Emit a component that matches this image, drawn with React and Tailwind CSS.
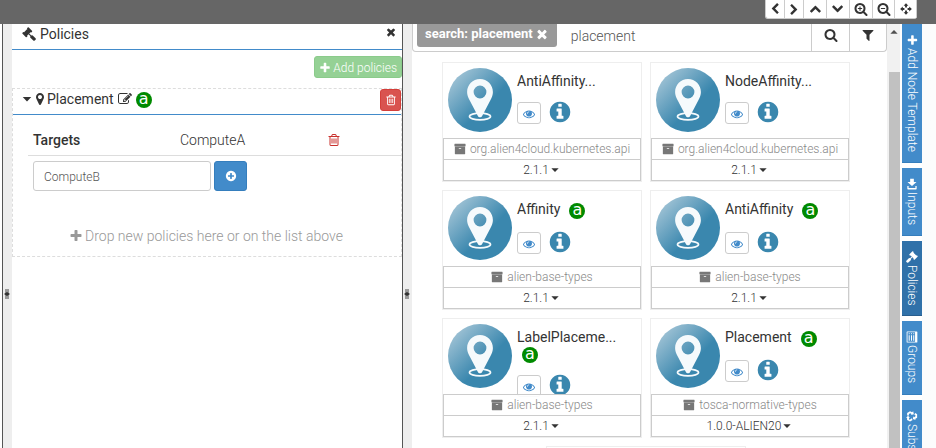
import React from "react";

const CIRCLE =
  "M1664 896q0 209-103 385.5t-279.5 279.5-385.5 103-385.5-103-279.5-279.5-103-385.5 103-385.5 279.5-279.5 385.5-103 385.5 103 279.5 279.5 103 385.5z";
const LENS =
  "M1216 832q0-185-131.5-316.5t-316.5-131.5-316.5 131.5-131.5 316.5 131.5 316.5 316.5 131.5 316.5-131.5 131.5-316.5zm512 832q0 52-38 90t-90 38q-54 0-90-38l-343-342q-179 124-399 124-143 0-273.5-55.5t-225-150-150-225-55.5-273.5 55.5-273.5 150-225 225-150 273.5-55.5 273.5 55.5 225 150 150 225 55.5 273.5q0 220-124 399l343 343q37 37 37 90z";

const PATHS = {
  plus: "M1600 736v192q0 40-28 68t-68 28h-416v416q0 40-28 68t-68 28h-192q-40 0-68-28t-28-68v-416h-416q-40 0-68-28t-28-68v-192q0-40 28-68t68-28h416v-416q0-40 28-68t68-28h192q40 0 68 28t28 68v416h416q40 0 68 28t28 68z",
  times:
    "M1490 1322q0 40-28 68l-136 136q-28 28-68 28t-68-28l-294-294-294 294q-28 28-68 28t-68-28l-136-136q-28-28-28-68t28-68l294-294-294-294q-28-28-28-68t28-68l136-136q28-28 68-28t68 28l294 294 294-294q28-28 68-28t68 28l136 136q28 28 28 68t-28 68l-294 294 294 294q28 28 28 68z",
  gavel:
    "M1771 1536q0 53-37 90l-107 108q-39 37-91 37-53 0-90-37l-363-364q-38-36-38-90 0-53 43-96l-256-256-126 126q-14 14-34 14t-34-14q2 2 12.5 12t12.5 13 10 11.5 10 13.5 6 13.5 5.5 16.5 1.5 18q0 38-28 68-3 3-16.5 18t-19 20.5-18.5 16.5-22 15.5-22 9-26 4.5q-40 0-68-28l-408-408q-28-28-28-68 0-13 4.5-26t9-22 15.5-22 16.5-18.5 20.5-19 18-16.5q30-28 68-28 10 0 18 1.5t16.5 5.5 13.5 6 13.5 10 11.5 10 13 12.5 12 12.5q-14-14-14-34t14-34l348-348q14-14 34-14t34 14q-2-2-12.5-12t-12.5-13-10-11.5-10-13.5-6-13.5-5.5-16.5-1.5-18q0-38 28-68 3-3 16.5-18t19-20.5 18.5-16.5 22-15.5 22-9 26-4.5q40 0 68 28l408 408q28 28 28 68 0 13-4.5 26t-9 22-15.5 22-16.5 18.5-20.5 19-18 16.5q-30 28-68 28-10 0-18-1.5t-16.5-5.5-13.5-6-13.5-10-11.5-10-13-12.5-12-12.5q14 14 14 34t-14 34l-126 126 256 256q43-43 96-43 52 0 91 37l363 363q37 39 37 91z",
  trash:
    "M704 736v576q0 14-9 23t-23 9h-64q-14 0-23-9t-9-23v-576q0-14 9-23t23-9h64q14 0 23 9t9 23zm256 0v576q0 14-9 23t-23 9h-64q-14 0-23-9t-9-23v-576q0-14 9-23t23-9h64q14 0 23 9t9 23zm256 0v576q0 14-9 23t-23 9h-64q-14 0-23-9t-9-23v-576q0-14 9-23t23-9h64q14 0 23 9t9 23zm128 724v-948h-896v948q0 22 7 40.5t14.5 27 10.5 8.5h832q3 0 10.5-8.5t14.5-27 7-40.5zm-672-1076h448l-48-117q-7-9-17-11h-317q-10 2-17 11zm928 32v64q0 14-9 23t-23 9h-96v948q0 83-47 143.5t-113 60.5h-832q-66 0-113-58.5t-47-141.5v-952h-96q-14 0-23-9t-9-23v-64q0-14 9-23t23-9h309l70-167q15-37 54-63t79-26h320q40 0 79 26t54 63l70 167h309q14 0 23 9t9 23z",
  edit: "M888 1184l116-116-152-152-116 116v56h96v96h56zm440-720q-16-16-33 1l-350 350q-17 17-1 33t33-1l350-350q17-17 1-33zm80 594v190q0 119-84.5 203.5t-203.5 84.5h-832q-119 0-203.5-84.5t-84.5-203.5v-832q0-119 84.5-203.5t203.5-84.5h832q63 0 117 25 15 7 18 23 3 17-9 29l-49 49q-14 14-32 8-23-6-45-6h-832q-66 0-113 47t-47 113v832q0 66 47 113t113 47h832q66 0 113-47t47-113v-126q0-13 9-22l64-64q15-15 35-7t20 29zm-96-738l288 288-672 672h-288v-288zm444 132l-92 92-288-288 92-92q28-28 68-28t68 28l152 152q28 28 28 68t-28 68z",
  marker:
    "M1152 640q0-106-75-181t-181-75-181 75-75 181 75 181 181 75 181-75 75-181zm256 0q0 109-33 179l-364 774q-16 33-47.5 52t-67.5 19-67.5-19-46.5-52l-365-774q-33-70-33-179 0-212 150-362t362-150 362 150 150 362z",
  search: LENS,
  zoomIn: LENS + "M700 560h136v204h204v136h-204v204h-136v-204h-204v-136h204z",
  zoomOut: LENS + "M496 764h544v136h-544z",
  filter:
    "M1595 295q17 41-14 70l-493 493v742q0 42-39 59-13 5-25 5-27 0-45-19l-256-256q-19-19-19-45v-486l-493-493q-31-29-14-70 17-39 59-39h1280q42 0 59 39z",
  eye: "M1664 960q-152-236-381-353 61 104 61 225 0 185-131.5 316.5t-316.5 131.5-316.5-131.5-131.5-316.5q0-121 61-225-229 117-381 353 133 205 333.5 326.5t434.5 121.5 434.5-121.5 333.5-326.5zm-720-384q0-20-14-34t-34-14q-125 0-214.5 89.5t-89.5 214.5q0 20 14 34t34 14 34-14 14-34q0-86 61-147t147-61q20 0 34-14t14-34zm848 384q0 34-20 69-140 230-376.5 368.5t-499.5 138.5-499.5-139-376.5-368q-20-35-20-69t20-69q140-229 376.5-368t499.5-139 499.5 139 376.5 368q20 35 20 69z",
  info:
    "M1152 1376v-160q0-14-9-23t-23-9h-96v-512q0-14-9-23t-23-9h-320q-14 0-23 9t-9 23v160q0 14 9 23t23 9h96v320h-96q-14 0-23 9t-9 23v160q0 14 9 23t23 9h448q14 0 23-9t9-23zm-128-896v-160q0-14-9-23t-23-9h-192q-14 0-23 9t-9 23v160q0 14 9 23t23 9h192q14 0 23-9t9-23z" +
    CIRCLE,
  plusCircle:
    "M1344 960v-128q0-26-19-45t-45-19h-256v-256q0-26-19-45t-45-19h-128q-26 0-45 19t-19 45v256h-256q-26 0-45 19t-19 45v128q0 26 19 45t45 19h256v256q0 26 19 45t45 19h128q26 0 45-19t19-45v-256h256q26 0 45-19t19-45z" +
    CIRCLE,
  archive:
    "M1088 832q0-26-19-45t-45-19h-256q-26 0-45 19t-19 45 19 45 45 19h256q26 0 45-19t19-45zm576-192v960q0 26-19 45t-45 19h-1408q-26 0-45-19t-19-45v-960q0-26 19-45t45-19h1408q26 0 45 19t19 45zm64-448v256q0 26-19 45t-45 19h-1536q-26 0-45-19t-19-45v-256q0-26 19-45t45-19h1536q26 0 45 19t19 45z",
  chevron:
    "M1427 301l-531 531 531 531q19 19 19 45t-19 45l-166 166q-19 19-45 19t-45-19l-742-742q-19-19-19-45t19-45l742-742q19-19 45-19t45 19l166 166q19 19 19 45t-19 45z",
  caret: "M350 640h1092l-546 560z",
  download:
    "M1180 200h420q100 0 100 100v1192q0 100-100 100h-420v-190h330v-1012h-330zM100 620h480v-400l620 676-620 676v-400h-480z",
  list:
    "M160 96h1472q100 0 100 100v1400q0 100-100 100h-1472q-100 0-100-100v-1400q0-100 100-100zM190 440v1126h1412v-1126zM320 560h170v150h-170zM620 560h850v150h-850zM320 900h170v150h-170zM620 900h850v150h-850zM320 1240h170v150h-170zM620 1240h850v150h-850z",
  recycle:
    "M620 130h520l190 300 150-90-120 440-440-110 150-90-130-200h-160l-110 180-240-150zM200 720l430-100 110 430-150-80-110 190 110 200h220v260h-370l-260-430 160-300zM1480 800l240 390-220 440h-330v160l-310-300 310-300v160h200l90-130-230-270z",
  move:
    "M896 20l360 400h-220v240h-280v-240h-220zM896 1772l-360-400h220v-240h280v240h220zM20 896l400-360v220h240v280h-240v220zM1772 896l-400 360v-220h-240v-280h240v-220z",
};

function Icon({ name, className = "size-3.5" }) {
  return (
    <svg viewBox="0 0 1792 1792" className={"shrink-0 " + className} fill="currentColor" fillRule="evenodd" aria-hidden="true">
      <path d={PATHS[name]} />
    </svg>
  );
}

function Badge({ className = "" }) {
  return (
    <span
      className={
        "flex size-4 shrink-0 items-center justify-center rounded-full bg-[#008a00] pb-[3px] font-['DejaVu_Sans',sans-serif] text-[16px] leading-none font-normal text-white " +
        className
      }
    >
      a
    </span>
  );
}

function PolicyLogo() {
  return (
    <svg viewBox="0 0 64 64" className="size-16 shrink-0" aria-hidden="true">
      <defs>
        <linearGradient id="policy-fill" x1="0.1" y1="0.1" x2="0.75" y2="0.75">
          <stop offset="0" stopColor="#a2c4d6" />
          <stop offset="0.75" stopColor="#3a87ae" />
          <stop offset="1" stopColor="#3a87ae" />
        </linearGradient>
      </defs>
      <circle cx="32" cy="32" r="32" fill="url(#policy-fill)" />
      <ellipse cx="32" cy="48.5" rx="10.5" ry="3.3" fill="none" stroke="#f6fafc" strokeWidth="1.7" />
      <path
        fill="#f6fafc"
        fillRule="evenodd"
        d="M32 11c-7.300 0-12.900 5.700-12.900 13 0 3 .9 5.200 2.400 8l8.500 16.200c.8 1.500 3.200 1.500 4 0L42.500 32c1.500-2.800 2.400-5 2.400-8 0-7.300-5.600-13-12.900-13zm0 6.600a6.400 6.400 0 1 1 0 12.800 6.400 6.400 0 0 1 0-12.800z"
      />
    </svg>
  );
}

function Card({ title, source, version, badge, wrapped }) {
  return (
    <article className="flex h-[120px] w-[200px] flex-col border border-[#eee] bg-white">
      <div className="flex h-[75px] shrink-0 gap-[5px] pl-[5px]">
        <div className="pt-[5px]">
          <PolicyLogo />
        </div>
        <div className="flex-1 pt-2">
          <div className="flex flex-wrap items-start">
            <h3 className={"text-[14px] leading-5 font-normal text-[#333] " + (wrapped ? "w-full" : "mr-1")}>{title}</h3>
            {badge && <Badge className={wrapped ? "mb-px ml-[5px]" : "mt-1 mb-0.5 ml-[5px]"} />}
          </div>
          <div className="mt-[11px] flex gap-[7px]">
            <button type="button" aria-label="View" className="flex h-[22px] w-6 items-center justify-center rounded-[3px] border border-[#ccc] bg-white pt-px text-[#428bca]">
              <Icon name="eye" className="size-3" />
            </button>
            <Icon name="info" className="-mt-0.5 size-6 text-[#3a87ae]" />
          </div>
        </div>
      </div>
      <div className="z-10 flex h-[21px] shrink-0 items-center justify-center gap-1 border border-b-0 border-[#ccc] bg-white/90 text-[12px] text-[#888]">
        <Icon name="archive" className="size-3 text-[#777]" />
        {source}
      </div>
      <button type="button" className="z-10 flex h-[22px] shrink-0 items-center justify-center border border-[#ccc] bg-white text-[12px] text-[#333]">
        {version}
        <Icon name="caret" className="size-3" />
      </button>
    </article>
  );
}

function Gutter() {
  return (
    <div className="w-2.5 shrink-0 border-l border-[#555] bg-[#eee] pt-[265px]">
      <svg viewBox="0 0 7 10" className="h-2.5 w-[7px]" aria-hidden="true">
        <rect x="2" y="0" width="4" height="10" fill="#999" />
        <path d="M1 5l3-2 3 2-3 2z" fill="#333" />
      </svg>
    </div>
  );
}

const TOOLS = [
  { label: "Left", icon: "chevron", size: "size-3", width: "w-5" },
  { label: "Right", icon: "chevron", size: "size-3 rotate-180", width: "w-5" },
  { label: "Up", icon: "chevron", size: "size-3 rotate-90", width: "w-6" },
  { label: "Down", icon: "chevron", size: "size-3 -rotate-90", width: "w-6" },
  { label: "Zoom in", icon: "zoomIn", size: "size-3.5", width: "w-6" },
  { label: "Zoom out", icon: "zoomOut", size: "size-3.5", width: "w-[23px]" },
  { label: "Center", icon: "move", size: "size-3", width: "w-[23px]" },
];

const CARDS = [
  { title: "AntiAffinity...", source: "org.alien4cloud.kubernetes.api", version: "2.1.1" },
  { title: "NodeAffinity...", source: "org.alien4cloud.kubernetes.api", version: "2.1.1" },
  { title: "Affinity", source: "alien-base-types", version: "2.1.1", badge: true },
  { title: "AntiAffinity", source: "alien-base-types", version: "2.1.1", badge: true },
  { title: "LabelPlaceme...", source: "alien-base-types", version: "2.1.1", badge: true, wrapped: true },
  { title: "Placement", source: "tosca-normative-types", version: "1.0.0-ALIEN20", badge: true },
];

const TABS = [
  { label: "Add Node Template", icon: "plus" },
  { label: "Inputs", icon: "download" },
  { label: "Policies", icon: "gavel", active: true },
  { label: "Groups", icon: "list" },
  { label: "Subs", icon: "recycle" },
];

export default function App() {
  return (
    <div className="flex h-screen flex-col overflow-hidden bg-white font-[Roboto,sans-serif] text-[14px] leading-5 font-light text-[#333]">
      <header className="flex h-6 shrink-0 items-start justify-end bg-[#666] pr-[19px]">
        <div className="flex h-[19px] overflow-hidden rounded-b-[3px] border-b border-l border-[#ccc] bg-white">
          {TOOLS.map((t) => (
            <button key={t.label} type="button" aria-label={t.label} className={"-ml-px flex items-center justify-center border-x border-[#ccc] pb-px " + t.width}>
              <Icon name={t.icon} className={t.size} />
            </button>
          ))}
        </div>
      </header>

      <div className="flex min-h-0 flex-1 pl-0.5">
        <Gutter />

        <section className="w-[390px] shrink-0">
          <div className="flex h-[26px] items-center border-b border-[#428bca] pr-[5px] pb-1.5 pl-2.5">
            <Icon name="gavel" className="mr-1 size-3.5" />
            <h2 className="flex-1 font-normal">Policies</h2>
            <button type="button" aria-label="Close" className="pb-1">
              <Icon name="times" className="size-3" />
            </button>
          </div>

          <div className="flex justify-end pt-1.5">
            <button type="button" className="flex h-[22px] items-center gap-0.5 rounded-[3px] border border-[#8bcb8b] bg-[#95d195] px-1 pt-px text-[12px] text-white">
              <Icon name="plus" className="size-3" />
              Add policies
            </button>
          </div>

          <div className="mt-2.5 h-[169px] border border-dashed border-[#ddd]">
            <div className="flex h-[26px] items-start border-b border-[#428bca] pl-[7px]">
              <Icon name="caret" className="mt-[3px] size-3.5" />
              <Icon name="marker" className="mt-[3px] -ml-px size-3.5" />
              <h3 className="font-normal">Placement</h3>
              <button type="button" aria-label="Rename" className="mt-[3px] ml-1">
                <Icon name="edit" className="size-3.5" />
              </button>
              <Badge className="mt-[3px] ml-1" />
              <button type="button" aria-label="Delete policy" className="ml-auto flex h-[22px] w-[21px] items-center justify-center rounded-[3px] border border-[#d43f3a] bg-[#d9534f] text-white">
                <Icon name="trash" className="size-3" />
              </button>
            </div>

            <div className="ml-[15px] flex h-[41px] items-center border-b border-[#ddd] pt-2.5 pl-[5px]">
              <div className="w-[147px] font-medium">Targets</div>
              <div className="w-[147px]">ComputeA</div>
              <button type="button" aria-label="Remove ComputeA" className="text-[#c9302c]">
                <Icon name="trash" className="size-3.5" />
              </button>
            </div>

            <div className="flex gap-[3px] pt-[5px] pl-5">
              <input
                aria-label="Target"
                defaultValue="ComputeB"
                className="h-[30px] w-[178px] rounded-[3px] border border-[#ccc] bg-white px-2.5 pt-0.5 text-[12px] text-[#555] outline-none"
              />
              <button type="button" aria-label="Add target" className="flex h-[30px] w-[33px] items-center justify-center rounded-[3px] border border-[#357ebd] bg-[#428bca] text-white">
                <Icon name="plusCircle" className="size-3" />
              </button>
            </div>

            <p className="mt-[35px] flex items-center justify-center gap-0.5 pr-0.5 text-[#999]">
              <Icon name="plus" className="size-3.5" />
              Drop new policies here or on the list above
            </p>
          </div>
        </section>

        <Gutter />

        <section className="min-w-0 flex-1 overflow-hidden">
          <div className="flex h-7 rounded-b-[4px] border border-t-0 border-[#ccc]">
            <button type="button" className="ml-1 flex h-[23px] items-center gap-0.5 rounded-b-[3px] bg-[#999] px-2 pb-[3px] text-[13px] font-bold text-white">
              search: placement
              <Icon name="times" className="size-3.5" />
            </button>
            <input aria-label="Search" defaultValue="placement" className="min-w-0 flex-1 bg-transparent px-3.5 pb-1 text-[14px] text-[#555] outline-none" />
            <button type="button" aria-label="Search" className="flex w-[38px] items-center justify-center border-l border-[#ccc] pb-1.5">
              <Icon name="search" className="size-3.5" />
            </button>
            <button type="button" aria-label="Filter" className="flex w-[37px] items-center justify-center border-l border-[#ccc] pb-1.5">
              <Icon name="filter" className="size-3.5" />
            </button>
          </div>
          <div className="flex flex-wrap justify-center gap-2 pt-2.5 pr-[7px]">
            {CARDS.map((c, i) => (
              <Card key={i} {...c} />
            ))}
            <article className="h-[120px] w-[200px] border border-[#eee]" />
          </div>
        </section>

        <div className="flex w-[13px] shrink-0 flex-col items-center bg-[#f1f1f1]">
          <Icon name="caret" className="mt-0.5 mb-[34px] size-3 rotate-180 text-[#505050]" />
          <div className="ml-0.5 w-[11px] flex-1 bg-[#c1c1c1]" />
        </div>

        <nav className="flex w-9 shrink-0 flex-col items-start gap-[5px] bg-linear-to-r from-white from-60% to-[#fcfcfc] to-60% pl-0.5">
          {TABS.map((t) => (
            <button
              key={t.label}
              type="button"
              className={
                "flex w-5 shrink-0 items-center gap-0.5 border-b pt-2.5 pb-2.5 text-[12px] text-white [writing-mode:vertical-rl] " +
                (t.active ? "border-[#285e8e] bg-[#3071a9]" : "border-[#357ebd] bg-[#428bca]")
              }
            >
              <Icon name={t.icon} className="size-3 rotate-90" />
              {t.label}
            </button>
          ))}
        </nav>
      </div>
    </div>
  );
}
